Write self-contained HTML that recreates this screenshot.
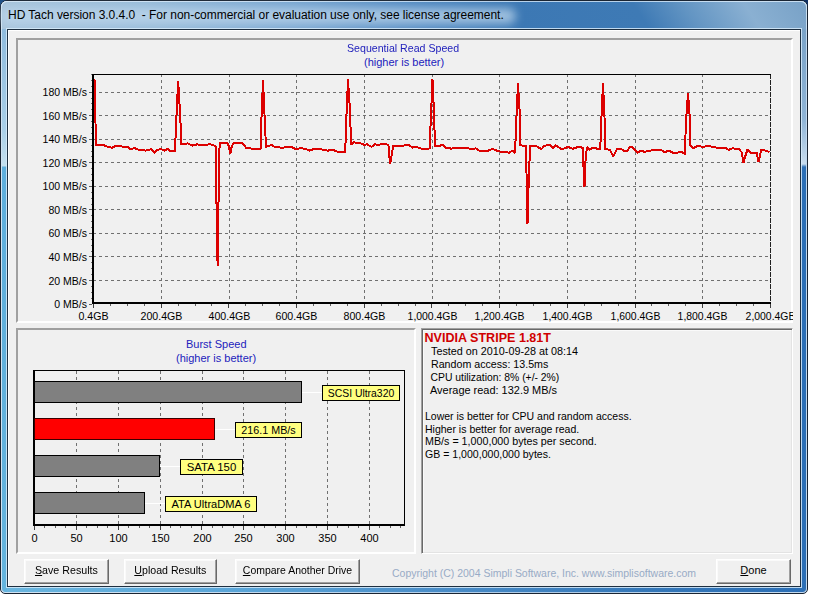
<!DOCTYPE html>
<html><head><meta charset="utf-8">
<style>
html,body{margin:0;padding:0;width:813px;height:595px;overflow:hidden;background:#fff;}
body{position:relative;font-family:"Liberation Sans",sans-serif;}
.a{position:absolute;}
#frame{left:0;top:0;width:806px;height:592px;border:1px solid #1a2533;border-radius:7px 7px 5px 5px;
 background:linear-gradient(90deg,#a9c4db 0%,#9dbcd8 15%,#7fa8d0 30%,#5b91c5 45%,#3f7ab6 60%,#3b76b2 72%,#6594c3 82%,#85abce 90%,#7aa2c8 100%);overflow:hidden;}
#frame:after{content:"";position:absolute;left:0;top:0;right:0;bottom:0;border:1px solid rgba(225,240,252,.7);border-radius:6px 6px 4px 4px;}
#tb{left:1px;top:1px;width:806px;height:28px;border-radius:6px 6px 0 0;box-shadow:inset 0 1px 0 rgba(225,240,252,.75),inset 1px 0 0 rgba(225,240,252,.75),inset -1px 0 0 rgba(225,240,252,.75);background:linear-gradient(57deg,#a9c5dc 7px,#98bbd9 133px,#78a5d0 259px,#5289c1 360px,#3c78b4 435px,#3e7ab5 544px,#6395c3 586px,#8ab0d2 637px,#7aa3c8 684px);}
#lfr{left:2px;top:29px;width:5px;height:563px;border-bottom-left-radius:4px;background:linear-gradient(180deg,#8fbbdd 0px,#a9cfe8 100px,#c5e0ef 137px,#5eaedc 138px,#64b4de 563px);}
#rfr{left:801px;top:29px;width:5px;height:563px;border-bottom-right-radius:4px;background:linear-gradient(180deg,#7aa3c8 0px,#8fb4d6 90px,#c8dcee 135px,#2c6fb6 138px,#2c6fb6 558px);}
#bfr{left:5px;top:587px;width:798px;height:5px;background:linear-gradient(90deg,#6ab6df 0%,#5aa5d8 30%,#4a8dc8 55%,#3578b9 80%,#2c6fb6 100%);}
#client{left:7px;top:29px;width:792px;height:556px;border:1px solid #1e2f40;background:#f0f0f0;box-shadow:0 0 0 1px rgba(215,235,250,.85);}
#client:before{content:"";position:absolute;left:0;top:0;width:100%;height:100%;border-left:1px solid #fff;border-top:1px solid #fff;box-sizing:border-box;}
#title{left:8px;top:8px;font-size:12px;color:#000;white-space:pre;letter-spacing:-0.03px;}
#glow{left:0px;top:8px;width:516px;height:16px;background:rgba(190,215,236,.75);border-radius:8px;filter:blur(5px);}
.sunk{box-sizing:border-box;border-style:solid;border-width:2px;border-color:#a0a0a0 #fff #fff #a0a0a0;}
.t11{font-size:11px;white-space:pre;line-height:13px;}
.blue{color:#2222bc;}
.btn{box-sizing:border-box;background:#f0f0f0;border-style:solid;border-width:1px;border-color:#fff #696969 #696969 #fff;box-shadow:inset -1px -1px 0 #a0a0a0,inset 1px 1px 0 #fafafa;font-size:11px;text-align:center;line-height:21px;color:#000;}
.info{font-size:12px;white-space:pre;transform-origin:0 0;line-height:13px;}
</style></head><body>
<div class="a" style="left:0;top:0;width:10px;height:10px;background:#1d4f86;"></div>
<div class="a" style="left:798px;top:0;width:10px;height:10px;background:#0d2f63;"></div>
<div id="frame" class="a"></div>
<div id="tb" class="a"></div>
<div id="bfr" class="a"></div>
<div id="lfr" class="a"></div>
<div id="rfr" class="a"></div>
<div id="glow" class="a"></div>
<div id="title" class="a">HD Tach version 3.0.4.0  - For non-commercial or evaluation use only, see license agreement.</div>
<div id="client" class="a"></div>

<!-- panels -->
<div class="a sunk" style="left:16px;top:38px;width:777px;height:285px;"></div>
<div class="a sunk" style="left:16px;top:328px;width:400px;height:226px;"></div>
<div class="a" style="box-sizing:border-box;left:421px;top:328px;width:372px;height:226px;border:1px solid;border-color:#a0a0a0 #fff #fff #a0a0a0;box-shadow:inset 1px 1px 0 #696969,inset -1px -1px 0 #e3e3e3,inset 2px 2px 0 #fafafa;"></div>

<div class="a t11 blue" style="left:347px;top:42px;transform:scaleX(.965);transform-origin:0 0;">Sequential Read Speed</div>
<div class="a t11 blue" style="left:364px;top:56px;">(higher is better)</div>

<svg class="a" style="left:0;top:0" width="813" height="595" id="chart">
<line x1="93" y1="280.5" x2="770" y2="280.5" stroke="#707070" stroke-dasharray="3 3"/>
<line x1="93" y1="256.5" x2="770" y2="256.5" stroke="#707070" stroke-dasharray="3 3"/>
<line x1="93" y1="233.5" x2="770" y2="233.5" stroke="#707070" stroke-dasharray="3 3"/>
<line x1="93" y1="209.5" x2="770" y2="209.5" stroke="#707070" stroke-dasharray="3 3"/>
<line x1="93" y1="186.5" x2="770" y2="186.5" stroke="#707070" stroke-dasharray="3 3"/>
<line x1="93" y1="162.5" x2="770" y2="162.5" stroke="#707070" stroke-dasharray="3 3"/>
<line x1="93" y1="139.5" x2="770" y2="139.5" stroke="#707070" stroke-dasharray="3 3"/>
<line x1="93" y1="115.5" x2="770" y2="115.5" stroke="#707070" stroke-dasharray="3 3"/>
<line x1="93" y1="92.5" x2="770" y2="92.5" stroke="#707070" stroke-dasharray="3 3"/>
<line x1="161.5" y1="74" x2="161.5" y2="302" stroke="#707070" stroke-dasharray="3 3"/>
<line x1="229.5" y1="74" x2="229.5" y2="302" stroke="#707070" stroke-dasharray="3 3"/>
<line x1="296.5" y1="74" x2="296.5" y2="302" stroke="#707070" stroke-dasharray="3 3"/>
<line x1="364.5" y1="74" x2="364.5" y2="302" stroke="#707070" stroke-dasharray="3 3"/>
<line x1="432.5" y1="74" x2="432.5" y2="302" stroke="#707070" stroke-dasharray="3 3"/>
<line x1="499.5" y1="74" x2="499.5" y2="302" stroke="#707070" stroke-dasharray="3 3"/>
<line x1="567.5" y1="74" x2="567.5" y2="302" stroke="#707070" stroke-dasharray="3 3"/>
<line x1="635.5" y1="74" x2="635.5" y2="302" stroke="#707070" stroke-dasharray="3 3"/>
<line x1="702.5" y1="74" x2="702.5" y2="302" stroke="#707070" stroke-dasharray="3 3"/>
<line x1="770.5" y1="74" x2="770.5" y2="304" stroke="#202020" stroke-dasharray="5 1"/>
<rect x="92" y="74" width="679" height="1" fill="#000"/>
<rect x="92" y="74" width="2" height="230" fill="#000"/>
<rect x="92" y="302" width="679" height="2" fill="#000"/>
<rect x="89" y="304" width="3" height="1" fill="#606060"/>
<rect x="91" y="298" width="1" height="1" fill="#707070"/>
<rect x="91" y="292" width="1" height="1" fill="#707070"/>
<rect x="91" y="286" width="1" height="1" fill="#707070"/>
<rect x="89" y="280" width="3" height="1" fill="#606060"/>
<rect x="91" y="274" width="1" height="1" fill="#707070"/>
<rect x="91" y="268" width="1" height="1" fill="#707070"/>
<rect x="91" y="262" width="1" height="1" fill="#707070"/>
<rect x="89" y="256" width="3" height="1" fill="#606060"/>
<rect x="91" y="251" width="1" height="1" fill="#707070"/>
<rect x="91" y="245" width="1" height="1" fill="#707070"/>
<rect x="91" y="239" width="1" height="1" fill="#707070"/>
<rect x="89" y="233" width="3" height="1" fill="#606060"/>
<rect x="91" y="227" width="1" height="1" fill="#707070"/>
<rect x="91" y="221" width="1" height="1" fill="#707070"/>
<rect x="91" y="215" width="1" height="1" fill="#707070"/>
<rect x="89" y="209" width="3" height="1" fill="#606060"/>
<rect x="91" y="204" width="1" height="1" fill="#707070"/>
<rect x="91" y="198" width="1" height="1" fill="#707070"/>
<rect x="91" y="192" width="1" height="1" fill="#707070"/>
<rect x="89" y="186" width="3" height="1" fill="#606060"/>
<rect x="91" y="180" width="1" height="1" fill="#707070"/>
<rect x="91" y="174" width="1" height="1" fill="#707070"/>
<rect x="91" y="168" width="1" height="1" fill="#707070"/>
<rect x="89" y="162" width="3" height="1" fill="#606060"/>
<rect x="91" y="156" width="1" height="1" fill="#707070"/>
<rect x="91" y="151" width="1" height="1" fill="#707070"/>
<rect x="91" y="145" width="1" height="1" fill="#707070"/>
<rect x="89" y="139" width="3" height="1" fill="#606060"/>
<rect x="91" y="133" width="1" height="1" fill="#707070"/>
<rect x="91" y="127" width="1" height="1" fill="#707070"/>
<rect x="91" y="121" width="1" height="1" fill="#707070"/>
<rect x="89" y="115" width="3" height="1" fill="#606060"/>
<rect x="91" y="109" width="1" height="1" fill="#707070"/>
<rect x="91" y="103" width="1" height="1" fill="#707070"/>
<rect x="91" y="98" width="1" height="1" fill="#707070"/>
<rect x="89" y="92" width="3" height="1" fill="#606060"/>
<rect x="91" y="86" width="1" height="1" fill="#707070"/>
<rect x="91" y="80" width="1" height="1" fill="#707070"/>
<rect x="91" y="74" width="1" height="1" fill="#707070"/>
<rect x="93" y="304" width="1" height="4" fill="#404040"/>
<rect x="110" y="304" width="1" height="2" fill="#606060"/>
<rect x="127" y="304" width="1" height="2" fill="#606060"/>
<rect x="144" y="304" width="1" height="2" fill="#606060"/>
<rect x="161" y="304" width="1" height="4" fill="#404040"/>
<rect x="178" y="304" width="1" height="2" fill="#606060"/>
<rect x="195" y="304" width="1" height="2" fill="#606060"/>
<rect x="211" y="304" width="1" height="2" fill="#606060"/>
<rect x="228" y="304" width="1" height="4" fill="#404040"/>
<rect x="245" y="304" width="1" height="2" fill="#606060"/>
<rect x="262" y="304" width="1" height="2" fill="#606060"/>
<rect x="279" y="304" width="1" height="2" fill="#606060"/>
<rect x="296" y="304" width="1" height="4" fill="#404040"/>
<rect x="313" y="304" width="1" height="2" fill="#606060"/>
<rect x="330" y="304" width="1" height="2" fill="#606060"/>
<rect x="347" y="304" width="1" height="2" fill="#606060"/>
<rect x="364" y="304" width="1" height="4" fill="#404040"/>
<rect x="381" y="304" width="1" height="2" fill="#606060"/>
<rect x="398" y="304" width="1" height="2" fill="#606060"/>
<rect x="415" y="304" width="1" height="2" fill="#606060"/>
<rect x="431" y="304" width="1" height="4" fill="#404040"/>
<rect x="448" y="304" width="1" height="2" fill="#606060"/>
<rect x="465" y="304" width="1" height="2" fill="#606060"/>
<rect x="482" y="304" width="1" height="2" fill="#606060"/>
<rect x="499" y="304" width="1" height="4" fill="#404040"/>
<rect x="516" y="304" width="1" height="2" fill="#606060"/>
<rect x="533" y="304" width="1" height="2" fill="#606060"/>
<rect x="550" y="304" width="1" height="2" fill="#606060"/>
<rect x="567" y="304" width="1" height="4" fill="#404040"/>
<rect x="584" y="304" width="1" height="2" fill="#606060"/>
<rect x="601" y="304" width="1" height="2" fill="#606060"/>
<rect x="618" y="304" width="1" height="2" fill="#606060"/>
<rect x="635" y="304" width="1" height="4" fill="#404040"/>
<rect x="651" y="304" width="1" height="2" fill="#606060"/>
<rect x="668" y="304" width="1" height="2" fill="#606060"/>
<rect x="685" y="304" width="1" height="2" fill="#606060"/>
<rect x="702" y="304" width="1" height="4" fill="#404040"/>
<rect x="719" y="304" width="1" height="2" fill="#606060"/>
<rect x="736" y="304" width="1" height="2" fill="#606060"/>
<rect x="753" y="304" width="1" height="2" fill="#606060"/>
<rect x="770" y="304" width="1" height="4" fill="#404040"/>
<text x="87" y="308.1" text-anchor="end" font-family="Liberation Sans" font-size="11" fill="#000" textLength="32.7" lengthAdjust="spacingAndGlyphs">0 MB/s</text>
<text x="87" y="284.55" text-anchor="end" font-family="Liberation Sans" font-size="11" fill="#000" textLength="38.6" lengthAdjust="spacingAndGlyphs">20 MB/s</text>
<text x="87" y="261.0" text-anchor="end" font-family="Liberation Sans" font-size="11" fill="#000" textLength="38.6" lengthAdjust="spacingAndGlyphs">40 MB/s</text>
<text x="87" y="237.45000000000002" text-anchor="end" font-family="Liberation Sans" font-size="11" fill="#000" textLength="38.6" lengthAdjust="spacingAndGlyphs">60 MB/s</text>
<text x="87" y="213.90000000000003" text-anchor="end" font-family="Liberation Sans" font-size="11" fill="#000" textLength="38.6" lengthAdjust="spacingAndGlyphs">80 MB/s</text>
<text x="87" y="190.35000000000002" text-anchor="end" font-family="Liberation Sans" font-size="11" fill="#000" textLength="44.4" lengthAdjust="spacingAndGlyphs">100 MB/s</text>
<text x="87" y="166.8" text-anchor="end" font-family="Liberation Sans" font-size="11" fill="#000" textLength="44.4" lengthAdjust="spacingAndGlyphs">120 MB/s</text>
<text x="87" y="143.25000000000003" text-anchor="end" font-family="Liberation Sans" font-size="11" fill="#000" textLength="44.4" lengthAdjust="spacingAndGlyphs">140 MB/s</text>
<text x="87" y="119.70000000000002" text-anchor="end" font-family="Liberation Sans" font-size="11" fill="#000" textLength="44.4" lengthAdjust="spacingAndGlyphs">160 MB/s</text>
<text x="87" y="96.15000000000003" text-anchor="end" font-family="Liberation Sans" font-size="11" fill="#000" textLength="44.4" lengthAdjust="spacingAndGlyphs">180 MB/s</text>
<clipPath id="cl"><rect x="18" y="300" width="775" height="30"/></clipPath>
<text x="93.5" y="319.5" text-anchor="middle" font-family="Liberation Sans" font-size="11" fill="#000" clip-path="url(#cl)" textLength="30.1" lengthAdjust="spacingAndGlyphs">0.4GB</text>
<text x="161.5" y="319.5" text-anchor="middle" font-family="Liberation Sans" font-size="11" fill="#000" clip-path="url(#cl)" textLength="41.9" lengthAdjust="spacingAndGlyphs">200.4GB</text>
<text x="229.5" y="319.5" text-anchor="middle" font-family="Liberation Sans" font-size="11" fill="#000" clip-path="url(#cl)" textLength="41.9" lengthAdjust="spacingAndGlyphs">400.4GB</text>
<text x="296.5" y="319.5" text-anchor="middle" font-family="Liberation Sans" font-size="11" fill="#000" clip-path="url(#cl)" textLength="41.9" lengthAdjust="spacingAndGlyphs">600.4GB</text>
<text x="364.5" y="319.5" text-anchor="middle" font-family="Liberation Sans" font-size="11" fill="#000" clip-path="url(#cl)" textLength="41.9" lengthAdjust="spacingAndGlyphs">800.4GB</text>
<text x="432.5" y="319.5" text-anchor="middle" font-family="Liberation Sans" font-size="11" fill="#000" clip-path="url(#cl)" textLength="49.8" lengthAdjust="spacingAndGlyphs">1,000.4GB</text>
<text x="499.5" y="319.5" text-anchor="middle" font-family="Liberation Sans" font-size="11" fill="#000" clip-path="url(#cl)" textLength="49.8" lengthAdjust="spacingAndGlyphs">1,200.4GB</text>
<text x="567.5" y="319.5" text-anchor="middle" font-family="Liberation Sans" font-size="11" fill="#000" clip-path="url(#cl)" textLength="49.8" lengthAdjust="spacingAndGlyphs">1,400.4GB</text>
<text x="635.5" y="319.5" text-anchor="middle" font-family="Liberation Sans" font-size="11" fill="#000" clip-path="url(#cl)" textLength="49.8" lengthAdjust="spacingAndGlyphs">1,600.4GB</text>
<text x="702.5" y="319.5" text-anchor="middle" font-family="Liberation Sans" font-size="11" fill="#000" clip-path="url(#cl)" textLength="49.8" lengthAdjust="spacingAndGlyphs">1,800.4GB</text>
<text x="770.5" y="319.5" text-anchor="middle" font-family="Liberation Sans" font-size="11" fill="#000" clip-path="url(#cl)" textLength="49.8" lengthAdjust="spacingAndGlyphs">2,000.4GB</text>
<clipPath id="cp"><rect x="94" y="75" width="676" height="227"/></clipPath>
<polyline points="94.5,79.5 95.0,101.5 95.5,123.4 96.1,145.3 99.1,144.9 103.6,144.6 105.9,146.4 109.7,146.9 111.9,147.9 115.7,145.7 120.3,145.7 122.5,146.9 127.8,146.9 130.1,149.4 134.6,148.1 136.9,149.4 143.0,149.9 145.2,150.6 148.2,150.2 151.3,148.8 154.3,152.6 156.6,149.9 161.1,149.1 164.9,150.6 167.5,148.8 169.4,150.6 175.0,150.6 176.0,126.7 177.0,104.0 178.2,81.3 179.5,104.0 180.5,123.0 181.2,144.1 188.0,143.4 192.5,145.6 197.0,144.4 203.9,145.3 209.9,144.1 214.5,145.6 215.7,146.6 216.2,186.0 216.9,226.0 217.6,265.6 218.5,203.0 219.6,143.3 227.3,143.4 228.8,146.0 230.3,154.0 231.8,146.0 234.1,143.1 242.5,143.1 246.2,147.9 250.8,148.4 256.8,149.4 259.8,148.7 260.5,148.7 261.2,125.0 262.1,103.0 263.0,80.3 264.0,103.0 265.0,125.0 266.0,147.0 271.2,144.9 275.0,146.9 279.5,147.3 282.6,148.1 285.6,146.9 291.6,146.9 296.2,149.4 300.0,148.1 305.3,148.8 309.8,150.6 313.6,149.1 320.4,149.1 323.4,149.9 328.0,150.6 332.5,149.6 337.8,151.9 345.3,151.9 345.9,127.2 347.0,103.0 348.0,79.5 349.5,103.0 350.5,127.0 351.2,144.6 353.7,142.3 361.0,143.4 364.1,144.9 367.1,144.3 371.6,146.9 374.7,144.3 379.2,144.9 382.4,143.6 388.4,144.7 389.1,154.5 390.1,163.9 392.1,153.1 393.1,146.1 401.9,145.7 408.7,144.9 412.5,147.6 416.3,146.9 421.6,148.8 426.1,149.1 429.9,148.4 430.5,126.4 431.5,103.7 432.5,79.5 434.0,112.8 435.0,146.1 439.5,146.1 442.6,144.6 445.6,147.6 451.6,148.7 454.7,147.6 466.8,147.6 471.3,149.4 475.8,148.4 480.4,151.4 486.4,151.4 492.5,148.8 498.5,151.4 506.1,151.9 509.1,152.9 512.2,150.6 515.2,152.9 515.8,130.2 517.0,106.8 518.0,82.6 519.2,106.0 520.0,114.3 520.5,145.3 526.3,146.1 526.6,185.4 527.5,224.0 529.0,171.8 530.2,146.0 536.2,146.1 541.5,149.1 544.5,145.8 549.8,144.9 552.8,147.9 555.8,145.3 561.9,149.4 568.0,146.9 572.5,148.8 577.0,147.3 580.1,146.9 582.6,148.1 583.5,167.2 584.5,186.9 585.5,160.7 587.0,146.9 589.6,149.9 592.2,148.1 595.2,148.4 600.3,148.8 601.0,127.2 602.0,105.3 603.0,83.3 604.5,117.4 605.0,148.8 610.1,149.9 613.2,156.7 616.9,149.1 621.5,149.1 623.7,150.6 627.5,150.6 629.8,146.9 632.8,147.3 637.4,152.9 640.4,150.6 644.9,151.9 649.5,150.6 660.8,149.9 664.6,152.2 669.1,150.6 672.9,152.9 681.8,152.2 684.8,153.7 685.5,134.8 686.5,114.3 688.0,93.2 690.0,120.4 690.5,145.4 693.2,148.4 697.7,145.8 703.0,146.9 708.3,145.8 712.8,146.9 718.1,147.9 725.7,147.9 728.7,149.9 732.5,148.4 738.6,148.8 741.6,152.2 743.5,162.8 744.6,158.2 747.6,149.1 750.7,153.4 756.7,152.9 758.5,162.0 761.3,149.9 765.8,150.6 769.6,152.2" fill="none" stroke="#dc0000" stroke-width="2" stroke-linejoin="miter" stroke-miterlimit="2" shape-rendering="crispEdges" clip-path="url(#cp)"/>
<line x1="76.5" y1="371" x2="76.5" y2="524" stroke="#707070" stroke-dasharray="3 3"/>
<line x1="118.5" y1="371" x2="118.5" y2="524" stroke="#707070" stroke-dasharray="3 3"/>
<line x1="160.5" y1="371" x2="160.5" y2="524" stroke="#707070" stroke-dasharray="3 3"/>
<line x1="202.5" y1="371" x2="202.5" y2="524" stroke="#707070" stroke-dasharray="3 3"/>
<line x1="243.5" y1="371" x2="243.5" y2="524" stroke="#707070" stroke-dasharray="3 3"/>
<line x1="285.5" y1="371" x2="285.5" y2="524" stroke="#707070" stroke-dasharray="3 3"/>
<line x1="327.5" y1="371" x2="327.5" y2="524" stroke="#707070" stroke-dasharray="3 3"/>
<line x1="369.5" y1="371" x2="369.5" y2="524" stroke="#707070" stroke-dasharray="3 3"/>
<rect x="33" y="370" width="372" height="1" fill="#000"/>
<rect x="404" y="370" width="1" height="156" fill="#000"/>
<rect x="33" y="370" width="2" height="156" fill="#000"/>
<rect x="33" y="524" width="372" height="2" fill="#000"/>
<rect x="34" y="526" width="1" height="4" fill="#404040"/>
<rect x="44" y="526" width="1" height="2" fill="#606060"/>
<rect x="55" y="526" width="1" height="2" fill="#606060"/>
<rect x="65" y="526" width="1" height="2" fill="#606060"/>
<rect x="76" y="526" width="1" height="4" fill="#404040"/>
<rect x="86" y="526" width="1" height="2" fill="#606060"/>
<rect x="97" y="526" width="1" height="2" fill="#606060"/>
<rect x="107" y="526" width="1" height="2" fill="#606060"/>
<rect x="118" y="526" width="1" height="4" fill="#404040"/>
<rect x="128" y="526" width="1" height="2" fill="#606060"/>
<rect x="139" y="526" width="1" height="2" fill="#606060"/>
<rect x="149" y="526" width="1" height="2" fill="#606060"/>
<rect x="160" y="526" width="1" height="4" fill="#404040"/>
<rect x="170" y="526" width="1" height="2" fill="#606060"/>
<rect x="180" y="526" width="1" height="2" fill="#606060"/>
<rect x="191" y="526" width="1" height="2" fill="#606060"/>
<rect x="201" y="526" width="1" height="4" fill="#404040"/>
<rect x="212" y="526" width="1" height="2" fill="#606060"/>
<rect x="222" y="526" width="1" height="2" fill="#606060"/>
<rect x="233" y="526" width="1" height="2" fill="#606060"/>
<rect x="243" y="526" width="1" height="4" fill="#404040"/>
<rect x="254" y="526" width="1" height="2" fill="#606060"/>
<rect x="264" y="526" width="1" height="2" fill="#606060"/>
<rect x="275" y="526" width="1" height="2" fill="#606060"/>
<rect x="285" y="526" width="1" height="4" fill="#404040"/>
<rect x="296" y="526" width="1" height="2" fill="#606060"/>
<rect x="306" y="526" width="1" height="2" fill="#606060"/>
<rect x="316" y="526" width="1" height="2" fill="#606060"/>
<rect x="327" y="526" width="1" height="4" fill="#404040"/>
<rect x="337" y="526" width="1" height="2" fill="#606060"/>
<rect x="348" y="526" width="1" height="2" fill="#606060"/>
<rect x="358" y="526" width="1" height="2" fill="#606060"/>
<rect x="369" y="526" width="1" height="4" fill="#404040"/>
<rect x="379" y="526" width="1" height="2" fill="#606060"/>
<rect x="390" y="526" width="1" height="2" fill="#606060"/>
<rect x="400" y="526" width="1" height="2" fill="#606060"/>
<text x="34.5" y="542" text-anchor="middle" font-family="Liberation Sans" font-size="11" fill="#000">0</text>
<text x="76.5" y="542" text-anchor="middle" font-family="Liberation Sans" font-size="11" fill="#000">50</text>
<text x="118.5" y="542" text-anchor="middle" font-family="Liberation Sans" font-size="11" fill="#000">100</text>
<text x="160.5" y="542" text-anchor="middle" font-family="Liberation Sans" font-size="11" fill="#000">150</text>
<text x="202.5" y="542" text-anchor="middle" font-family="Liberation Sans" font-size="11" fill="#000">200</text>
<text x="243.5" y="542" text-anchor="middle" font-family="Liberation Sans" font-size="11" fill="#000">250</text>
<text x="285.5" y="542" text-anchor="middle" font-family="Liberation Sans" font-size="11" fill="#000">300</text>
<text x="327.5" y="542" text-anchor="middle" font-family="Liberation Sans" font-size="11" fill="#000">350</text>
<text x="369.5" y="542" text-anchor="middle" font-family="Liberation Sans" font-size="11" fill="#000">400</text>
<rect x="34.5" y="381.5" width="267" height="21" fill="#808080" stroke="#000" stroke-width="1"/>
<rect x="302" y="392" width="20" height="1" fill="#fff"/>
<rect x="322.5" y="385.5" width="77" height="15" fill="#ffff80" stroke="#000" stroke-width="1"/>
<text x="361.0" y="397" text-anchor="middle" font-family="Liberation Sans" font-size="11" fill="#000" textLength="66.4" lengthAdjust="spacingAndGlyphs">SCSI Ultra320</text>
<rect x="34.5" y="418.5" width="180" height="21" fill="#ff0000" stroke="#3a0000" stroke-width="1"/>
<rect x="215" y="429" width="20" height="1" fill="#fff"/>
<rect x="235.5" y="422.5" width="66" height="15" fill="#ffff80" stroke="#000" stroke-width="1"/>
<text x="268.5" y="434" text-anchor="middle" font-family="Liberation Sans" font-size="11" fill="#000" textLength="54.3" lengthAdjust="spacingAndGlyphs">216.1 MB/s</text>
<rect x="34.5" y="455.5" width="125" height="21" fill="#808080" stroke="#000" stroke-width="1"/>
<rect x="160" y="466" width="20" height="1" fill="#fff"/>
<rect x="180.5" y="459.5" width="62" height="15" fill="#ffff80" stroke="#000" stroke-width="1"/>
<text x="211.5" y="471" text-anchor="middle" font-family="Liberation Sans" font-size="11" fill="#000" textLength="49.5" lengthAdjust="spacingAndGlyphs">SATA 150</text>
<rect x="34.5" y="492.5" width="110" height="21" fill="#808080" stroke="#000" stroke-width="1"/>
<rect x="145" y="503" width="20" height="1" fill="#fff"/>
<rect x="165.5" y="496.5" width="91" height="15" fill="#ffff80" stroke="#000" stroke-width="1"/>
<text x="211.0" y="508" text-anchor="middle" font-family="Liberation Sans" font-size="11" fill="#000" textLength="79" lengthAdjust="spacingAndGlyphs">ATA UltraDMA 6</text>
<text x="424.5" y="341.5" font-family="Liberation Sans" font-weight="bold" font-size="12" fill="#d00000" textLength="126.5" lengthAdjust="spacingAndGlyphs">NVIDIA STRIPE 1.81T</text>
<text x="431" y="354.6" font-family="Liberation Sans" font-size="11" fill="#000" textLength="147" lengthAdjust="spacingAndGlyphs">Tested on 2010-09-28 at 08:14</text>
<text x="431" y="367.7" font-family="Liberation Sans" font-size="11" fill="#000" textLength="117.3" lengthAdjust="spacingAndGlyphs">Random access: 13.5ms</text>
<text x="430.5" y="380.9" font-family="Liberation Sans" font-size="11" fill="#000" textLength="128.8" lengthAdjust="spacingAndGlyphs">CPU utilization: 8% (+/- 2%)</text>
<text x="430" y="393.5" font-family="Liberation Sans" font-size="11" fill="#000" textLength="127" lengthAdjust="spacingAndGlyphs">Average read: 132.9 MB/s</text>
<text x="425" y="419.9" font-family="Liberation Sans" font-size="11" fill="#000" textLength="206.6" lengthAdjust="spacingAndGlyphs">Lower is better for CPU and random access.</text>
<text x="425" y="432.7" font-family="Liberation Sans" font-size="11" fill="#000" textLength="154.2" lengthAdjust="spacingAndGlyphs">Higher is better for average read.</text>
<text x="425" y="445.4" font-family="Liberation Sans" font-size="11" fill="#000" textLength="171.8" lengthAdjust="spacingAndGlyphs">MB/s = 1,000,000 bytes per second.</text>
<text x="425" y="458" font-family="Liberation Sans" font-size="11" fill="#000" textLength="125.9" lengthAdjust="spacingAndGlyphs">GB = 1,000,000,000 bytes.</text>
<text x="392" y="576.6" font-family="Liberation Sans" font-size="11" fill="#98abc6" textLength="304" lengthAdjust="spacingAndGlyphs">Copyright (C) 2004 Simpli Software, Inc. www.simplisoftware.com</text>
</svg>

<div class="a t11 blue" style="left:186px;top:338px;">Burst Speed</div>
<div class="a t11 blue" style="left:176px;top:352px;">(higher is better)</div>

<!-- info -->
<!-- buttons -->
<div class="a btn" style="left:24px;top:559px;width:85px;height:25px;"><span style="display:inline-block;transform:scaleX(.97)"><u>S</u>ave Results</span></div>
<div class="a btn" style="left:124px;top:559px;width:93px;height:25px;"><span style="display:inline-block;transform:scaleX(.965)"><u>U</u>pload Results</span></div>
<div class="a btn" style="left:235px;top:559px;width:125px;height:25px;"><span style="display:inline-block;transform:scaleX(.95)"><u>C</u>ompare Another Drive</span></div>
<div class="a btn" style="left:716px;top:559px;width:75px;height:25px;"><u>D</u>one</div>
</body></html>
